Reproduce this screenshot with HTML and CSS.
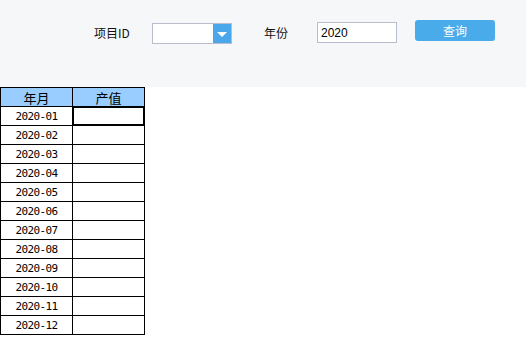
FILE: index.html
```html
<!DOCTYPE html>
<html lang="zh-CN">
<head>
  <meta charset="UTF-8">
  <title>产值查询</title>
  <link rel="stylesheet" href="styles.css">
</head>
<body>
  <div class="toolbar">
    <span class="label label-id">项目ID</span>
    <div class="combo">
      <div class="combo-text"></div>
      <div class="combo-btn"><span class="arrow"></span></div>
    </div>
    <span class="label label-year">年份</span>
    <input class="year-input" type="text" value="2020">
    <button class="query-btn">查询</button>
  </div>

  <table class="grid">
    <thead>
      <tr>
        <th>年月</th>
        <th>产值</th>
      </tr>
    </thead>
    <tbody>
      <tr><td>2020-01</td><td class="sel"></td></tr>
      <tr><td>2020-02</td><td></td></tr>
      <tr><td>2020-03</td><td></td></tr>
      <tr><td>2020-04</td><td></td></tr>
      <tr><td>2020-05</td><td></td></tr>
      <tr><td>2020-06</td><td></td></tr>
      <tr><td>2020-07</td><td></td></tr>
      <tr><td>2020-08</td><td></td></tr>
      <tr><td>2020-09</td><td></td></tr>
      <tr><td>2020-10</td><td></td></tr>
      <tr><td>2020-11</td><td></td></tr>
      <tr><td>2020-12</td><td></td></tr>
    </tbody>
  </table>
</body>
</html>
```

FILE: styles.css
```css
body {
  margin: 0;
  background: #ffffff;
  font-family: "Noto Sans CJK SC", "Liberation Sans", sans-serif;
  font-size: 12px;
  color: #000;
}

.toolbar {
  height: 87px;
  box-sizing: border-box;
  background: #f6f7f9;
  display: flex;
  align-items: flex-start;
  padding: 20px 0 0 94px;
}

.label {
  font-size: 12px;
  line-height: 26px;
  color: #111;
}

.label-id {
  width: 58px;
}

.label-year {
  width: 53px;
  margin-left: 32px;
}

.combo {
  display: flex;
  width: 80px;
  height: 21px;
  margin-top: 3px;
  box-sizing: border-box;
  border: 1px solid #b8bccc;
  background: #fff;
}

.combo-text {
  flex: 1;
}

.combo-btn {
  width: 18px;
  background: #4aa8ea;
  display: flex;
  align-items: center;
  justify-content: center;
}

.arrow {
  width: 0;
  height: 0;
  border-left: 5px solid transparent;
  border-right: 5px solid transparent;
  border-top: 5px solid #fff;
  margin-top: 1px;
}

.year-input {
  width: 80px;
  height: 21px;
  margin: 2px 0 0 0;
  box-sizing: border-box;
  border: 1px solid #b8bccc;
  padding: 0 3px;
  font-family: "Liberation Sans", sans-serif;
  font-size: 12px;
  color: #000;
  outline: none;
}

.query-btn {
  width: 80px;
  height: 21px;
  margin-left: 18px;
  border: none;
  border-radius: 3px;
  background: #4aabea;
  color: #fff;
  font-family: "Noto Sans CJK SC", sans-serif;
  font-size: 12px;
  padding: 0;
}

.grid {
  border-collapse: collapse;
  width: 145px;
  table-layout: fixed;
}

.grid th,
.grid td {
  border: 1px solid #000;
  height: 19px;
  padding: 0;
  text-align: center;
  box-sizing: border-box;
}

.grid th {
  background: #99ccff;
  font-weight: normal;
  font-size: 13px;
  line-height: 17px;
}

.grid td {
  font-size: 11px;
  line-height: 17px;
  font-family: "DejaVu Sans Mono", monospace;
  letter-spacing: -0.6px;
}

.grid .sel {
  box-shadow: inset 1px 1px 0 #000, inset -1px -1px 0 #000;
}
```
